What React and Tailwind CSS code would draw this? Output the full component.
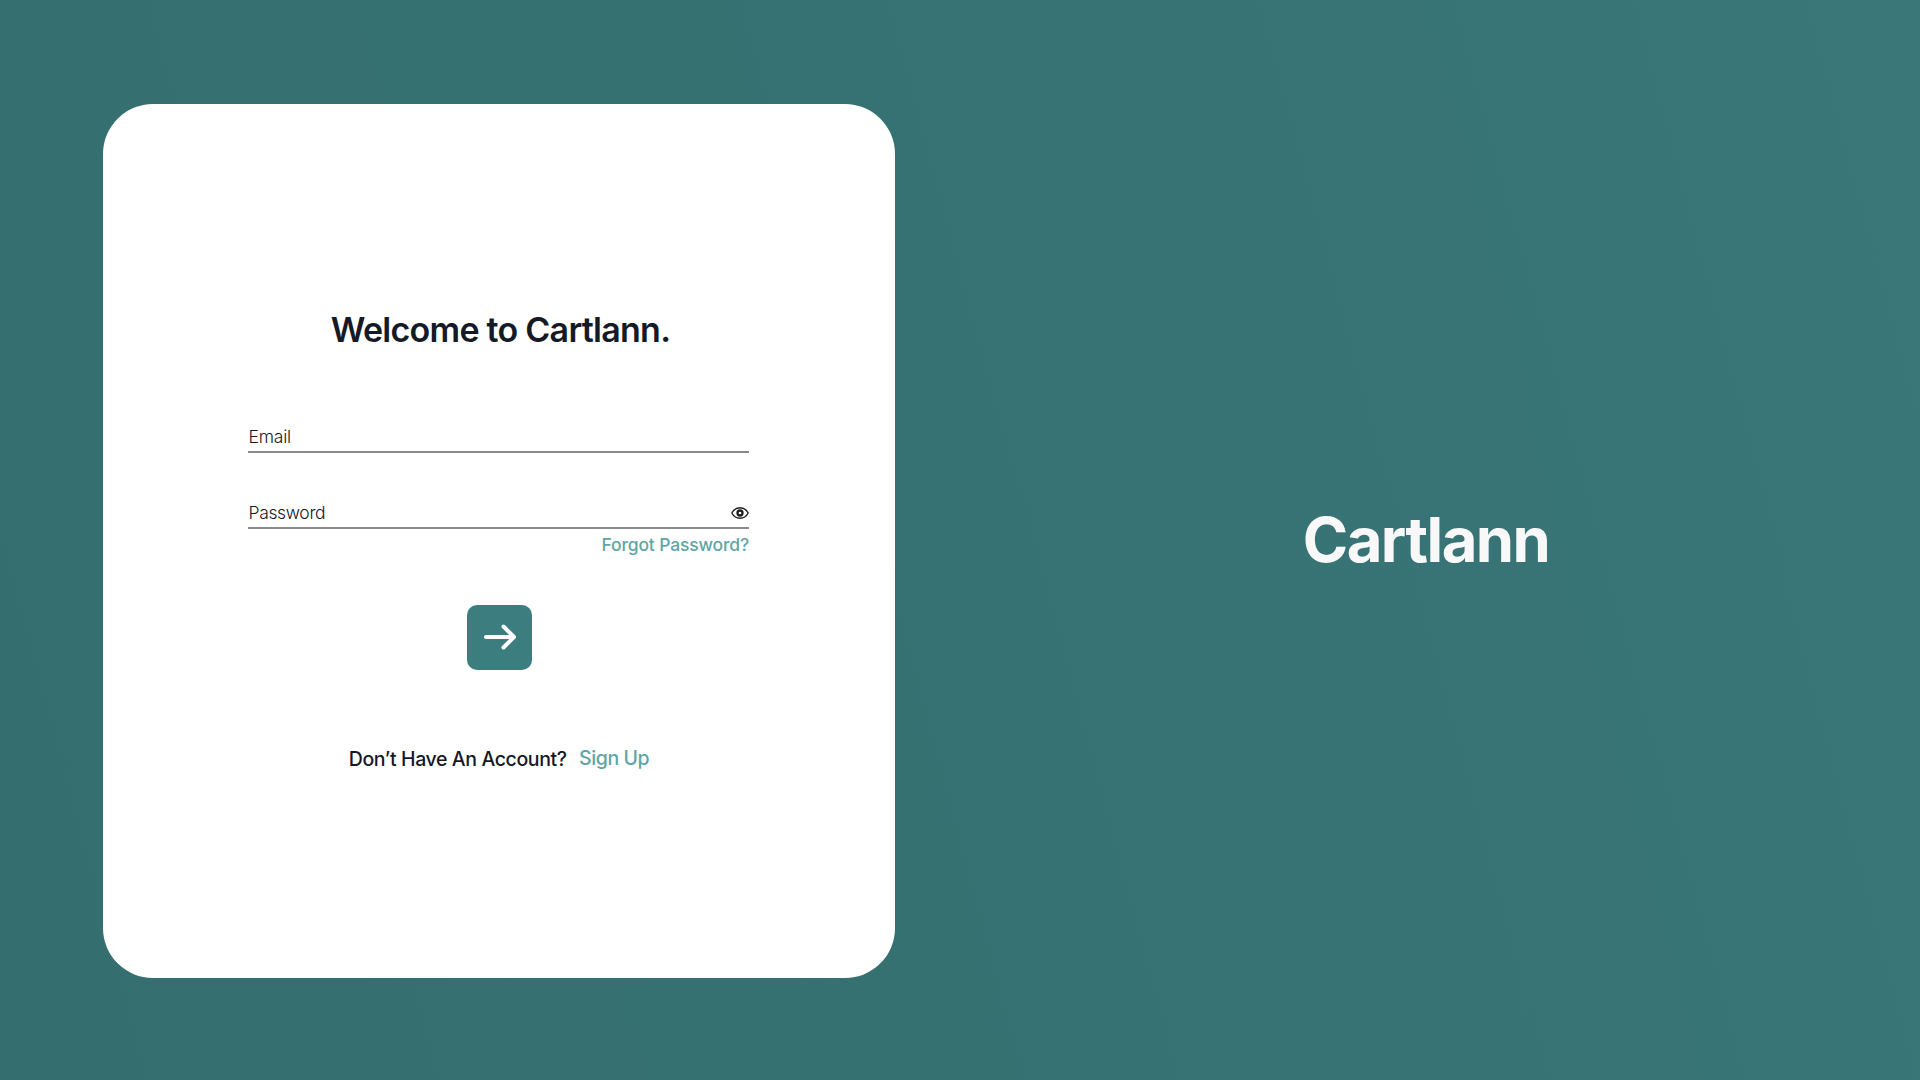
function EyeIcon() {
  return (
    <svg width="18" height="12" viewBox="0 0 18 12" fill="none" className="mb-[3px] block">
      <path
        d="M0.8 6C2.7 2.6 5.7 0.8 9 0.8S15.3 2.6 17.2 6C15.3 9.4 12.3 11.2 9 11.2S2.7 9.4 0.8 6Z"
        stroke="#1b1c1e"
        strokeWidth="1.4"
        strokeLinejoin="round"
      />
      <circle cx="9" cy="6" r="2.5" stroke="#1b1c1e" strokeWidth="2.3" />
    </svg>
  );
}

function ArrowIcon() {
  return (
    <svg width="32" height="26" viewBox="0 0 32 26" fill="none" className="block">
      <path
        d="M2 13H29.5M19.5 2.5L30 13L19.5 23.5"
        stroke="#fff"
        strokeWidth="4"
        strokeLinecap="round"
        strokeLinejoin="round"
      />
    </svg>
  );
}

function Field({ label, className, children }) {
  return (
    <div
      className={`flex h-[28.5px] w-full items-end justify-between border-b-2 border-[#8c8990] ${className}`}
    >
      <span className="mb-[1.5px] block pl-[0.5px] text-[17.5px] leading-6 font-light text-[#151826]">
        {label}
      </span>
      {children}
    </div>
  );
}

export default function App() {
  return (
    <div className="flex h-screen w-screen items-center overflow-hidden bg-[linear-gradient(75deg,#356e6f_0%,#367172_45%,#3a7779_100%)] pl-[103px] font-['Inter',sans-serif]">
      <main className="mt-0.5 flex h-[874px] w-[792px] shrink-0 flex-col items-center rounded-[50px] bg-white pt-[206px]">
        <h1 className="pl-[3px] text-[34px] leading-10 font-semibold tracking-[-0.74px] text-[#151a26]">
          Welcome to Cartlann.
        </h1>
        <form className="mt-[74px] mr-px flex w-[501px] flex-col items-center">
          <Field label="Email" className="tracking-[-0.2px]" />
          <Field label="Password" className="mt-[47.5px] tracking-[-0.35px]">
            <button type="button" aria-label="Show password" className="self-end pb-[5px]">
              <EyeIcon />
            </button>
          </Field>
          <a className="mt-[4.5px] self-end text-[17.5px] leading-6 font-medium tracking-[-0.15px] text-[#5fa5a5]">
            Forgot Password?
          </a>
          <button
            type="button"
            aria-label="Sign in"
            className="mt-[47.5px] ml-px flex size-[65px] items-center justify-center rounded-[10px] bg-[#3c7e80] pl-px"
          >
            <ArrowIcon />
          </button>
        </form>
        <p className="mt-[75px] flex gap-[12.3px] text-[19.5px] leading-7 font-medium tracking-[-0.39px] text-[#151826]">
          <span>Don’t Have An Account?</span>
          <a className="-mt-px text-[#5fa5a5]">Sign Up</a>
        </p>
      </main>
      <div className="flex flex-1 justify-center pl-[37px]">
        <span className="text-[61.5px] leading-none font-bold tracking-[-1.6px] text-[#f8f8f8]">Cartlann</span>
      </div>
    </div>
  );
}
